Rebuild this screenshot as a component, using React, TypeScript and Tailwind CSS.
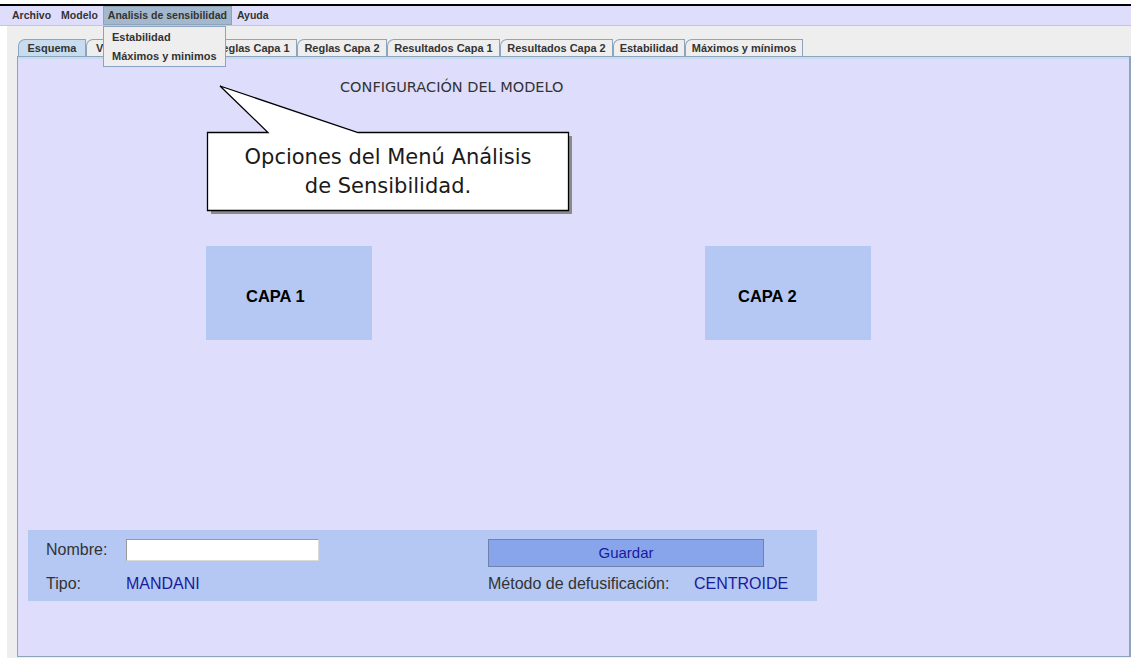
import type { ReactNode } from 'react'

const TABS: { label: string; w: string; active?: boolean; left?: boolean }[] = [
  { label: 'Esquema', w: 'w-[68px]', active: true },
  { label: 'V', w: 'w-[121px]', left: true },
  { label: 'Reglas Capa 1', w: 'w-[90px]' },
  { label: 'Reglas Capa 2', w: 'w-[90px]' },
  { label: 'Resultados Capa 1', w: 'w-[113px]' },
  { label: 'Resultados Capa 2', w: 'w-[113px]' },
  { label: 'Estabilidad', w: 'w-[72px]' },
  { label: 'Máximos y mínimos', w: 'w-[118px]' },
]

function MenuItem({ children, open }: { children: ReactNode; open?: boolean }) {
  return (
    <div
      className={[
        'flex h-full items-center px-[5px] text-[10.5px] font-bold text-[#333333]',
        open ? 'bg-[#a3b8cc] ring-1 ring-inset ring-[#8ea3b8]' : '',
      ].join(' ')}
    >
      {children}
    </div>
  )
}

function CapaBox({ label, pad }: { label: string; pad: string }) {
  return (
    <div
      className={[
        'flex h-[94px] w-[166px] items-center bg-[#b4c8f3] pt-[6px] text-[16.5px] font-bold text-black',
        pad,
      ].join(' ')}
    >
      {label}
    </div>
  )
}

function Callout() {
  return (
    <div className="pointer-events-none absolute left-0 top-0 h-[658px] w-[1131px]">
      <svg width="1131" height="658" className="absolute left-0 top-0">
        <rect x="211" y="136" width="361" height="78" fill="#8a8a8a" />
        <path
          d="M207.5 132.5 L268 132.5 L220 86 L358 132.5 L568.5 132.5 L568.5 210.5 L207.5 210.5 Z"
          fill="#ffffff"
          stroke="#000000"
          strokeWidth="1.3"
        />
      </svg>
      <div className="absolute left-[208px] top-[133px] flex h-[77px] w-[360px] flex-col items-center justify-center font-['DejaVu_Sans',sans-serif] text-[21px] leading-[29px] text-[#1a1a1a]">
        <span>Opciones del Menú Análisis</span>
        <span>de Sensibilidad.</span>
      </div>
    </div>
  )
}

export default function App() {
  return (
    <div className="relative flex h-[658px] w-[1131px] flex-col overflow-hidden bg-white font-['Liberation_Sans',Arial,sans-serif]">
      <div className="h-[4px] bg-white" />
      <div className="h-[2px] bg-black" />

      {/* menu bar */}
      <div className="flex h-[20px] items-stretch border-b border-[#c6c6d6] bg-[#dedefc] pl-[7px]">
        <MenuItem>Archivo</MenuItem>
        <MenuItem>Modelo</MenuItem>
        <MenuItem open>Analisis de sensibilidad</MenuItem>
        <MenuItem>Ayuda</MenuItem>
      </div>

      <div className="flex flex-1">
        <div className="w-[7px] bg-white" />
        <div className="flex flex-1 flex-col bg-[#eeeeee] pb-[1px] pl-[10px]">
          {/* tabs */}
          <div className="flex h-[30px] items-end pl-[1px]">
            {TABS.map((t) => (
              <div
                key={t.label}
                className={[
                  'flex h-[17px] items-center overflow-hidden whitespace-nowrap rounded-tl-[7px] border-l border-r border-t border-[#8ea3bd] text-[11px] font-bold text-[#333333]',
                  t.w,
                  t.left ? 'justify-start pl-[9px]' : 'justify-center',
                  t.active ? 'bg-[#c8dcf0]' : 'bg-[#eeeeee]',
                ].join(' ')}
              >
                {t.label}
              </div>
            ))}
          </div>

          {/* content panel */}
          <div className="flex flex-1 flex-col border-b border-l border-r-2 border-t border-[#8ea3bd] bg-[#dedefc]">
            <div className="h-[2px] bg-[#c8dcf0]" />
            <div className="ml-[322px] mt-[20px] font-['DejaVu_Sans',sans-serif] text-[14.5px] leading-[16px] text-[#333333]">
              CONFIGURACIÓN DEL MODELO
            </div>

            <div className="ml-[188px] mt-[151px] flex gap-[333px]">
              <CapaBox label="CAPA 1" pad="pl-[40px]" />
              <CapaBox label="CAPA 2" pad="pl-[33px]" />
            </div>

            <div className="ml-[10px] mt-[190px] flex h-[71px] w-[789px] flex-col bg-[#b4c8f3] pl-[18px] pt-[9px] text-[16px]">
              <div className="flex items-start">
                <span className="w-[80px] leading-[22px] text-[#333333]">Nombre:</span>
                <input
                  type="text"
                  className="h-[22px] w-[193px] border border-[#9a9a9a] border-b-[#dadada] border-r-[#dadada] bg-white outline-none"
                />
                <span className="w-[169px]" />
                <button
                  type="button"
                  className="h-[28px] w-[276px] border border-[#6f82ad] bg-[#88a5ec] text-[15px] text-[#1a1a9c]"
                >
                  Guardar
                </button>
              </div>
              <div className="mt-[7px] flex h-[20px] items-center">
                <span className="w-[80px] text-[#333333]">Tipo:</span>
                <span className="w-[362px] text-[#1a1a9c]">MANDANI</span>
                <span className="w-[206px] text-[#333333]">Método de defusificación:</span>
                <span className="text-[#1a1a9c]">CENTROIDE</span>
              </div>
            </div>
          </div>
        </div>
      </div>

      {/* dropdown menu */}
      <div className="absolute left-[103px] top-[26px] flex h-[41px] w-[123px] flex-col justify-center border border-[#8aa3c5] bg-[#eeeeee] pl-[8px] text-[11px] font-bold leading-[19px] text-[#333333]">
        <span>Estabilidad</span>
        <span>Máximos y minimos</span>
      </div>

      <Callout />
    </div>
  )
}
